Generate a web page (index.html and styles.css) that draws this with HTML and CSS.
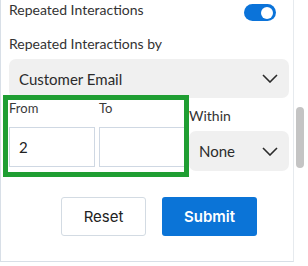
FILE: index.html
```html
<!DOCTYPE html>
<html lang="en">
<head>
<meta charset="UTF-8">
<title>Repeated Interactions</title>
<link rel="stylesheet" href="styles.css">
</head>
<body>

<div class="screen">
    <div class="panel">
        <div class="row-toggle">
            <span class="title">Repeated Interactions</span>
            <span class="toggle"><span class="knob"></span></span>
        </div>

        <div class="label by-label">Repeated Interactions by</div>
        <div class="select main-select">
            <span>Customer Email</span>
            <svg class="chevron" width="16" height="9" viewBox="0 0 16 9"><path d="M1 1l7 7 7-7" fill="none" stroke="#2b2b2b" stroke-width="1.6"/></svg>
        </div>

        <div class="range-row">
            <div class="field from">
                <div class="small-label">From</div>
                <div class="input">2</div>
            </div>
            <div class="field to">
                <div class="small-label">To</div>
                <div class="input"></div>
            </div>
            <div class="field within">
                <div class="label within-label">Within</div>
                <div class="select small-select">
                    <span>None</span>
                    <svg class="chevron" width="16" height="9" viewBox="0 0 16 9"><path d="M1 1l7 7 7-7" fill="none" stroke="#2b2b2b" stroke-width="1.6"/></svg>
                </div>
            </div>
        </div>

        <div class="actions">
            <button class="btn reset">Reset</button>
            <button class="btn submit">Submit</button>
        </div>

        <!-- green highlight drawn over the range fields -->
        <div class="highlight"></div>
    </div>

    <div class="scrollbar">
        <div class="thumb"></div>
    </div>
</div>

</body>
</html>
```

FILE: styles.css
```css
body {
    margin: 0;
    font-family: 'Lato', 'Open Sans', sans-serif;
    color: #333;
    background: #fff;
}
.screen {
    display: flex;
    width: 308px;
    height: 266px;
    overflow: hidden;
}

/* Form panel */
.panel {
    position: relative;
    width: 294px;
    height: 262px;
    box-sizing: border-box;
    padding: 0 4px 0 8px;
    border-left: 1px solid #d8dfe7;
    border-right: 1px solid #e6eaee;
    border-bottom: 1px solid #d8dfe7;
}
.row-toggle {
    display: flex;
    justify-content: space-between;
    align-items: flex-start;
    height: 24px;
}
.title {
    font-size: 14px;
    line-height: 20px;
}
.toggle {
    width: 32px;
    height: 17px;
    margin: 4px 13px 0 0;
    border-radius: 9px;
    background: #0b73d9;
    display: flex;
    justify-content: flex-end;
    align-items: center;
    padding: 0 3px;
    box-sizing: border-box;
}
.knob {
    width: 12px;
    height: 12px;
    border-radius: 50%;
    background: #fff;
}
.label {
    font-size: 14px;
    line-height: 20px;
}
.by-label {
    margin-top: 10px;
}
.select {
    display: flex;
    justify-content: space-between;
    align-items: center;
    background: #f0f0f0;
    border-radius: 7px;
    padding: 0 11px 0 10px;
    box-sizing: border-box;
    font-size: 15px;
    color: #2b2b2b;
}
.main-select {
    margin-top: 5px;
    height: 39px;
}

/* From / To / Within */
.range-row {
    display: flex;
    gap: 4px;
    margin-top: 1px;
}
.field.from, .field.to {
    width: 86px;
}
.field.within {
    width: 100px;
}
.small-label {
    font-size: 13px;
    line-height: 18px;
    color: #3a3a3a;
}
.input {
    margin-top: 10px;
    height: 40px;
    box-sizing: border-box;
    border: 1px solid #cfd8e3;
    padding: 0 9px;
    font-size: 15px;
    line-height: 38px;
    color: #222;
}
.within-label {
    margin-top: 8px;
    line-height: 18px;
}
.small-select {
    margin-top: 6px;
    height: 40px;
}

.highlight {
    position: absolute;
    left: 2px;
    top: 95px;
    width: 186px;
    height: 82px;
    box-sizing: border-box;
    border: 5px solid #1f9e32;
}

/* Buttons */
.actions {
    display: flex;
    gap: 16px;
    margin: 26px 0 0 52px;
}
.btn {
    height: 39px;
    border-radius: 3px;
    font-family: 'Inter', 'Lato', sans-serif;
    font-size: 15px;
    cursor: pointer;
}
.reset {
    width: 85px;
    background: #fff;
    border: 1px solid #d3dbe3;
    color: #222;
}
.submit {
    width: 95px;
    background: #0b74d7;
    border: none;
    color: #fff;
    font-weight: 600;
}

/* Fake scrollbar */
.scrollbar {
    width: 14px;
    padding-left: 2px;
    box-sizing: border-box;
}
.thumb {
    width: 8px;
    height: 61px;
    margin-top: 107px;
    border-radius: 4px;
    background: #c4c4c4;
}
```
